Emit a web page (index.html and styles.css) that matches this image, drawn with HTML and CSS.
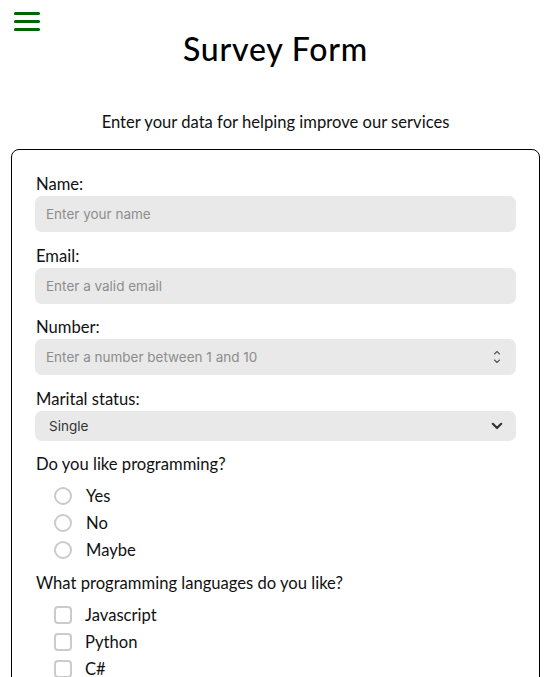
FILE: index.html
```html
<!DOCTYPE html>
<html lang="en">
<head>
<meta charset="utf-8">
<title>Survey Form</title>
<link rel="stylesheet" href="styles.css">
</head>
<body>
<header class="top">
  <button class="menu" aria-label="Menu">
    <svg width="28" height="24" viewBox="0 0 28 24">
      <path d="M2.5 3.5H25.5M2.5 11.5H25.5M2.5 19.5H25.5" stroke="#006400" stroke-width="3.2" stroke-linecap="round" fill="none"/>
    </svg>
  </button>
  <h1 class="title">Survey Form</h1>
</header>
<p class="subtitle">Enter your data for helping improve our services</p>
<form class="card">
  <div class="field">
    <label class="label" for="name">Name:</label>
    <input class="input" id="name" type="text" placeholder="Enter your name">
  </div>
  <div class="field">
    <label class="label" for="email">Email:</label>
    <input class="input" id="email" type="text" placeholder="Enter a valid email">
  </div>
  <div class="field">
    <label class="label" for="number">Number:</label>
    <div class="input-wrap">
      <input class="input bare" id="number" type="text" placeholder="Enter a number between 1 and 10">
      <svg class="spin" width="10" height="16" viewBox="0 0 10 16">
        <path d="M2.5 5L5 2.5L7.5 5M2.5 11L5 13.5L7.5 11" stroke="#555" stroke-width="1.1" fill="none" stroke-linecap="round" stroke-linejoin="round"/>
      </svg>
    </div>
  </div>
  <div class="field">
    <label class="label" for="status">Marital status:</label>
    <div class="select-wrap">
      <select class="select" id="status">
        <option>Single</option>
        <option>Married</option>
      </select>
      <svg class="chev" width="12" height="8" viewBox="0 0 12 8">
        <path d="M1.8 1.8L6 6L10.2 1.8" stroke="#333" stroke-width="2.2" fill="none" stroke-linecap="round" stroke-linejoin="round"/>
      </svg>
    </div>
  </div>
  <div class="group">
    <p class="label">Do you like programming?</p>
    <label class="opt"><input class="radio" type="radio" name="like"><span>Yes</span></label>
    <label class="opt"><input class="radio" type="radio" name="like"><span>No</span></label>
    <label class="opt"><input class="radio" type="radio" name="like"><span>Maybe</span></label>
  </div>
  <div class="group">
    <p class="label">What programming languages do you like?</p>
    <label class="opt"><input class="check" type="checkbox"><span>Javascript</span></label>
    <label class="opt"><input class="check" type="checkbox"><span>Python</span></label>
    <label class="opt"><input class="check" type="checkbox"><span>C#</span></label>
  </div>
</form>
</body>
</html>
```
FILE: styles.css
```css
* { box-sizing: border-box; }
body {
  margin: 0;
  font-family: Lato, "Noto Sans", sans-serif;
  color: #111;
  background: #fff;
}
.top {
  display: grid;
  grid-template-columns: 1fr auto 1fr;
  align-items: start;
}
.menu {
  justify-self: start;
  margin: 10px 0 0 13px;
  padding: 0;
  border: 0;
  background: transparent;
  display: flex;
}
.title {
  margin: 28px 0 0;
  font-size: 32px;
  line-height: 41px;
  font-weight: 500;
  letter-spacing: 0.8px;
  color: #000;
}
.subtitle {
  margin: 41px 0 15px;
  text-align: center;
  font-size: 16.6px;
  line-height: 24px;
}
.card {
  margin: 0 11px;
  border: 1px solid #000;
  border-radius: 8px;
  padding: 22px 23px 20px;
}
.field { margin-bottom: 11.5px; }
.label {
  display: block;
  margin: 0;
  padding-left: 1px;
  font-size: 16.6px;
  line-height: 24px;
}
.input, .input-wrap {
  display: block;
  width: 100%;
  height: 36px;
  border: 0;
  border-radius: 7px;
  background: #e9e9e9;
  padding: 0 11px;
  font-family: Inter, sans-serif;
  font-size: 13.5px;
  color: #222;
  outline: none;
}
.input::placeholder { color: #8d8d8d; }
.input-wrap {
  display: flex;
  align-items: center;
  padding: 0 14px 0 0;
}
.input.bare {
  flex: 1;
  background: transparent;
  height: 36px;
}
.spin { flex: none; }
.select-wrap {
  display: flex;
  align-items: center;
  height: 30px;
  border-radius: 7px;
  background: #e9e9e9;
  padding-right: 13px;
}
.select {
  flex: 1;
  appearance: none;
  -webkit-appearance: none;
  border: 0;
  background: transparent;
  height: 30px;
  padding: 0 14px;
  font-family: Inter, sans-serif;
  font-size: 13.5px;
  color: #333;
  outline: none;
}
.chev { flex: none; }
.group { margin-bottom: 7px; }
.group .label { margin-bottom: 6.5px; }
.opt {
  display: flex;
  align-items: center;
  height: 27px;
  padding-left: 19px;
  font-size: 16.6px;
}
.radio, .check {
  appearance: none;
  -webkit-appearance: none;
  margin: 0 14px 0 0;
  width: 18px;
  height: 18px;
  border: 2px solid #cbcbcb;
  background: #fff;
  flex: none;
}
.radio { border-radius: 50%; }
.check { border-radius: 4px; margin-right: 13px; }
```
